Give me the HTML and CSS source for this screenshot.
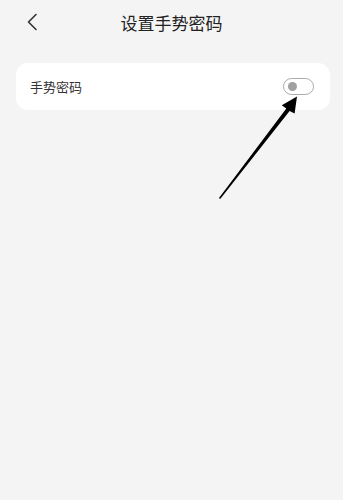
FILE: index.html
```html
<!DOCTYPE html>
<html lang="zh">
<head>
    <meta charset="UTF-8">
    <meta name="viewport" content="width=device-width, initial-scale=1.0">
    <title>设置手势密码</title>
    <link rel="stylesheet" href="styles.css">
</head>
<body>
    <div class="pagina">
        <div class="cabecera">
            <span class="atras">
                <svg width="12" height="18" viewBox="0 0 12 18"><path d="M10 1.5 L2.5 9 L10 16.5" fill="none" stroke="#333" stroke-width="1.6" stroke-linecap="round" stroke-linejoin="round"/></svg>
            </span>
            <h1>设置手势密码</h1>
        </div>
        <div class="tarjeta">
            <span class="etiqueta">手势密码</span>
            <span class="interruptor"><span class="perilla"></span></span>
        </div>
        <svg class="flecha" width="343" height="500" viewBox="0 0 343 500">
            <path d="M218.8 198.2 L286.3 108.6 L281.8 105.2 L297 96.5 L294.6 113.4 L289.6 110.9 L220.4 198.8 Z" fill="#000"/>
        </svg>
    </div>
</body>
</html>
```

FILE: styles.css
```css
body {
    margin: 0;
    background-color: #f4f4f4;
    font-family: "Noto Sans CJK SC", "Noto Sans", sans-serif;
    color: #333;
}
.pagina {
    position: relative;
    width: 343px;
    height: 500px;
}
.cabecera {
    height: 44px;
    display: flex;
    align-items: center;
    justify-content: center;
    position: relative;
}
.atras {
    position: absolute;
    left: 26px;
    top: 13px;
    display: flex;
}
h1 {
    margin: 0;
    font-size: 17px;
    font-weight: 400;
    color: #222;
}
.tarjeta {
    margin: 19px 13px 0 16px;
    height: 47px;
    background: #fff;
    border-radius: 12px;
    display: flex;
    align-items: center;
    justify-content: space-between;
    padding: 0 16px 0 14px;
}
.etiqueta {
    font-size: 13px;
    color: #333;
}
.interruptor {
    width: 25px;
    height: 15px;
    border: 1.5px solid #aaa;
    border-radius: 10px;
    display: flex;
    align-items: center;
    padding-left: 4px;
    box-sizing: content-box;
}
.perilla {
    width: 9px;
    height: 9px;
    border-radius: 50%;
    background: #a0a0a0;
}
.flecha {
    position: absolute;
    left: 0;
    top: 0;
    pointer-events: none;
}
```
